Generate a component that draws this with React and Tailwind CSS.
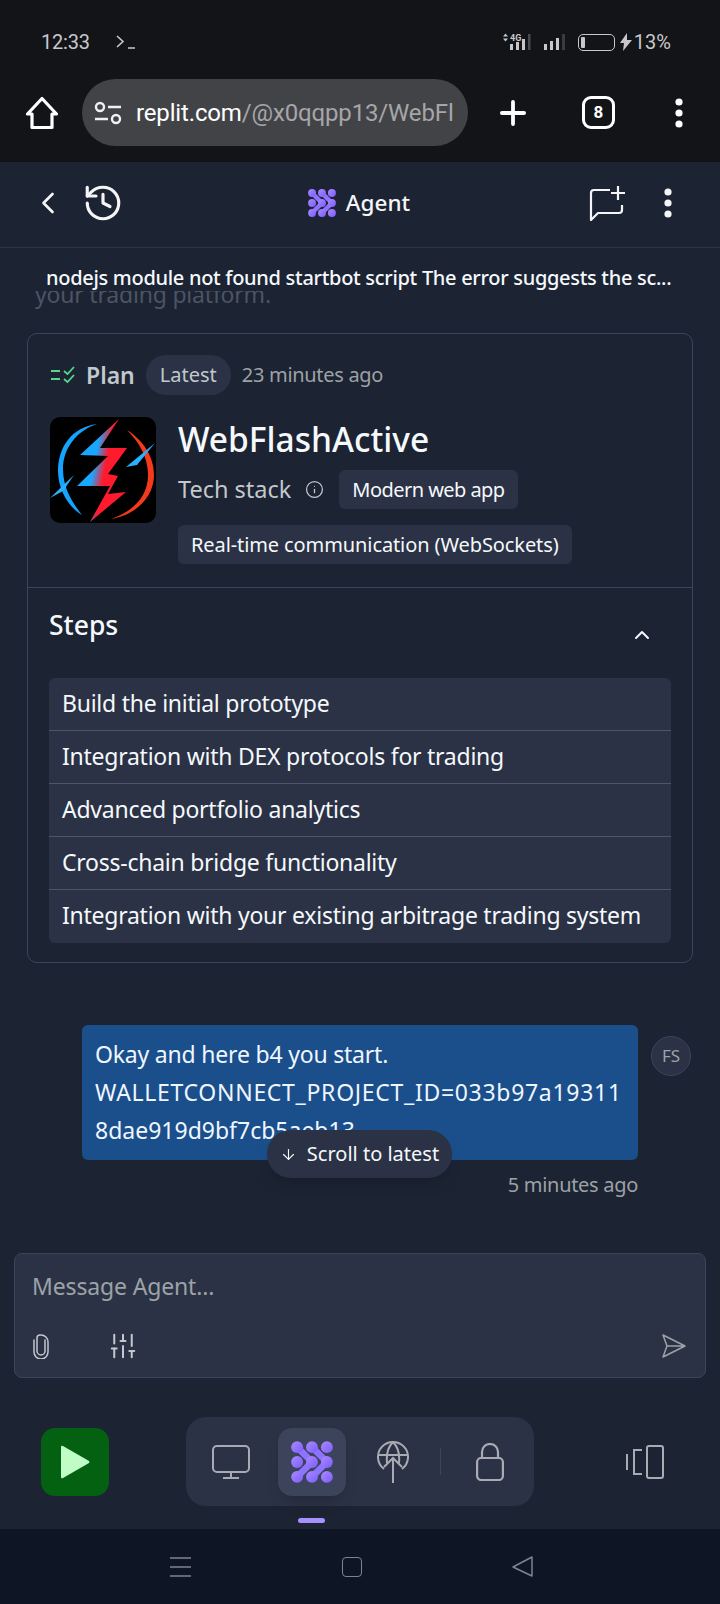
import React from 'react';
import { ChevronLeft, ChevronUp, History, Info, ArrowDown, Plus, SlidersVertical } from 'lucide-react';

const plex = "font-['Noto_Sans',sans-serif]";
const roboto = "font-['Roboto',sans-serif]";

const steps = [
  'Build the initial prototype',
  'Integration with DEX protocols for trading',
  'Advanced portfolio analytics',
  'Cross-chain bridge functionality',
  'Integration with your existing arbitrage trading system',
];

const AgentIcon = ({ className, id }) => (
  <svg viewBox="0 0 24 24" className={className}>
    <defs>
      <linearGradient id={id} x1="0" y1="0" x2="1" y2="1">
        <stop offset="0" stopColor="#a98bff" />
        <stop offset="1" stopColor="#7c5cff" />
      </linearGradient>
    </defs>
    <g fill={`url(#${id})`} stroke="#8f72ff" strokeLinecap="round" strokeLinejoin="round">
      <path d="M3.5 3.5 L12 12 L3.5 20.5 M12 3.5 L20.5 12 L12 20.5" fill="none" strokeWidth="3.8" />
      <circle cx="3.5" cy="3.5" r="3.4" stroke="none" />
      <circle cx="12" cy="3.5" r="3.4" stroke="none" />
      <circle cx="20.5" cy="3.5" r="3.4" stroke="none" />
      <circle cx="3.5" cy="12" r="3.4" stroke="none" />
      <circle cx="12" cy="12" r="3.4" stroke="none" />
      <circle cx="20.5" cy="12" r="3.4" stroke="none" />
      <circle cx="3.5" cy="20.5" r="3.4" stroke="none" />
      <circle cx="12" cy="20.5" r="3.4" stroke="none" />
      <circle cx="20.5" cy="20.5" r="3.4" stroke="none" />
    </g>
  </svg>
);

const Dots = ({ className }) => (
  <svg viewBox="0 0 8 30" className={className} fill="currentColor">
    <circle cx="4" cy="4" r="3.6" />
    <circle cx="4" cy="15" r="3.6" />
    <circle cx="4" cy="26" r="3.6" />
  </svg>
);

const Logo = () => (
  <svg viewBox="0 0 106 106" className="w-[106px] h-[106px] shrink-0 rounded-[10px] bg-black">
    <defs>
      <linearGradient id="bolt" x1="0.15" y1="0.35" x2="0.8" y2="0.6">
        <stop offset="0.3" stopColor="#19a8ff" />
        <stop offset="0.62" stopColor="#ff1a2e" />
      </linearGradient>
    </defs>
    <path d="M47 7 C22 10 8 30 8 54 C8 72 18 90 32 98 C21 84 13 70 13 52 C13 32 26 14 47 7Z" fill="#14a4ff" />
    <path d="M77 13 C94 24 104 40 104 58 C104 80 86 98 61 102 C82 95 99 80 98 56 C97 40 90 26 77 13Z" fill="#f5391d" />
    <path d="M69 2 L30 38 L58 39 L27 69 L60 69 L40 105 L76 75 L58 77 L68 59 L58 57 L77 31 L50 31Z" fill="url(#bolt)" />
    <path d="M105 26 L76 50 L87 48Z" fill="#2bb0ff" />
    <path d="M24 58 L0 81 L13 74Z" fill="#2bb0ff" />
  </svg>
);

const StatusBar = () => (
  <div className={`h-[70px] pl-[41px] pr-[49px] pt-[14px] flex items-center justify-between text-[#c8c8ca] ${roboto}`}>
    <div className="flex items-center gap-[26px]">
      <span className="text-[20px] tracking-[-0.2px]">12:33</span>
      <svg viewBox="0 0 20 14" className="w-[20px] h-[14px]" fill="none" stroke="#c8c8ca" strokeWidth="1.6">
        <path d="M1 1l6 5.5L1 12M12 13h7" />
      </svg>
    </div>
    <div className="flex items-center">
      <svg viewBox="0 0 74 18" className="w-[74px] h-[18px]">
        <path d="M4 3.5l2.5-3 2.5 3zM4 5.5l2.5 3 2.5-3z" fill="#c8c8ca" />
        <text x="11" y="8" fontSize="9" fontWeight="700" fill="#c8c8ca" fontFamily="Roboto, sans-serif">4G</text>
        <path d="M11 11h3v6h-3zM17 9h3v8h-3zM23 6h3v11h-3z" fill="#c8c8ca" />
        <path d="M29 1h2.5v16H29z" fill="#4a4b4e" />
        <path d="M45 11h3v6h-3zM51 8h3v9h-3zM57 5h3v12h-3z" fill="#c8c8ca" />
        <path d="M63 1h3v16h-3z" fill="#3a3b3e" />
      </svg>
      <div className="ml-[5px] w-[37px] h-[17px] border-[1.5px] border-[#c8c8ca] rounded-[5px] p-[2px]">
        <div className="w-[4px] h-full bg-[#c8c8ca] rounded-[1px]" />
      </div>
      <svg viewBox="0 0 12 18" className="ml-[5px] w-[12px] h-[18px]" fill="#c8c8ca">
        <path d="M7 0L0 10h4l-1 8 9-11H7z" />
      </svg>
      <span className="ml-[2px] text-[20px]">13%</span>
    </div>
  </div>
);

const BrowserBar = () => (
  <div className="h-[92px] pb-[7px] pl-[25px] flex items-center text-white">
    <svg viewBox="0 0 34 34" className="w-[34px] h-[34px] shrink-0" fill="none" stroke="white" strokeWidth="3.2" strokeLinejoin="round">
      <path d="M17 2.5 L2.5 18 H7 V31.5 H27 V18 H31.5 Z" />
    </svg>
    <div className={`ml-[23px] w-[386px] h-[67px] shrink-0 rounded-full bg-[#424347] flex items-center pl-[12px] pr-[14px] ${roboto}`}>
      <svg viewBox="0 0 28 24" className="w-[28px] h-[24px] shrink-0" fill="none" stroke="#f0f0f0" strokeWidth="2.4">
        <circle cx="6" cy="6" r="4" />
        <path d="M14 6h13M1 18h13" />
        <circle cx="22" cy="18" r="4" />
      </svg>
      <div className="ml-[14px] whitespace-nowrap text-[24px] tracking-[-0.15px] text-[#a6a6a8]">
        <span className="text-white">replit.com</span>/@x0qqpp13/WebFl
      </div>
    </div>
    <Plus className="ml-[26px] w-[38px] h-[38px] shrink-0" strokeWidth={2.4} />
    <div className={`ml-[50px] w-[33px] h-[33px] shrink-0 border-[3px] border-white rounded-[9px] flex items-center justify-center text-[17px] font-bold ${roboto}`}>8</div>
    <Dots className="ml-[60px] w-[8px] h-[30px] shrink-0" />
  </div>
);

const Header = () => (
  <div className="h-[86px] shrink-0 border-b border-[#2b3547] bg-[#1c2333] px-[30px] pb-[3px] flex items-center justify-between text-[#f5f5f7]">
    <div className="flex items-center gap-[16px]">
      <ChevronLeft className="w-[36px] h-[36px]" strokeWidth={1.8} />
      <History className="w-[42px] h-[42px]" strokeWidth={1.8} />
    </div>
    <div className={`ml-[5px] flex items-center gap-[10px] text-[22.5px] font-medium ${plex}`}>
      <AgentIcon id="agentHeader" className="w-[28px] h-[28px]" />
      Agent
    </div>
    <div className="flex items-center gap-[38px] mr-[18px]">
      <svg viewBox="0 0 37 36" className="w-[37px] h-[36px]" fill="none" stroke="#f5f5f7" strokeWidth="2.2" strokeLinejoin="round">
        <path d="M21 5H5a3 3 0 0 0-3 3V35L9 28H30a3 3 0 0 0 3-3V20" />
        <path d="M29 1v14M22 8h14" />
      </svg>
      <Dots className="w-[8px] h-[30px]" />
    </div>
  </div>
);

const Chip = ({ children, className = '' }) => (
  <span className={`h-[39px] px-[13px] rounded-[6px] bg-[#2b3245] text-[#f5f9fc] text-[20px] flex items-center whitespace-nowrap ${plex} ${className}`}>{children}</span>
);

const PlanCard = () => (
  <div className={`mx-[27px] h-[630px] border border-[#3c445c] rounded-[10px] ${plex}`}>
    <div className="h-[254px] px-[22px] pt-[21px] border-b border-[#3c445c]">
      <div className="flex items-center h-[40px]">
        <svg viewBox="0 0 26 18" className="w-[26px] h-[18px]" fill="none" stroke="#58d68d" strokeWidth="1.8">
          <path d="M1 5h9M1 13h9M14 5l3.5 3L24 1M14 13l3.5 3L24 9" />
        </svg>
        <span className="ml-[10px] text-[23px] font-semibold text-[#c2c8cc]">Plan</span>
        <span className="ml-[11px] h-[40px] px-[14px] rounded-full bg-[#2b3245] flex items-center text-[20px] text-[#c2c8cc]">Latest</span>
        <span className="ml-[11px] text-[20px] tracking-[-0.3px] text-[#9da2a6]">23 minutes ago</span>
      </div>
      <div className="mt-[22px] flex gap-[22px]">
        <Logo />
        <div>
          <div className="text-[33.5px] leading-[44px] font-medium text-[#f5f9fc]">WebFlashActive</div>
          <div className="mt-[9px] flex items-center">
            <span className="text-[23.5px] text-[#c2c8cc]">Tech stack</span>
            <Info className="ml-[14px] w-[19px] h-[19px] text-[#c2c8cc]" strokeWidth={1.6} />
            <span className="ml-[15px]"><Chip className="tracking-[-0.55px]">Modern web app</Chip></span>
          </div>
          <div className="mt-[16px] flex"><Chip className="tracking-[-0.1px]">Real-time communication (WebSockets)</Chip></div>
        </div>
      </div>
    </div>
    <div className="px-[21px] pt-[18px]">
      <div className="flex items-center justify-between h-[40px] pr-[17px]">
        <span className="text-[26.5px] font-medium text-[#f5f9fc]">Steps</span>
        <ChevronUp className="w-[24px] h-[24px] text-[#f5f9fc] mt-[17px]" />
      </div>
      <div className="mt-[32px] rounded-[6px] overflow-hidden divide-y divide-[#4e5569]">
        {steps.map((s) => (
          <div key={s} className="h-[53px] px-[13px] pb-[2px] bg-[#2b3245] flex items-center text-[23px] tracking-[-0.25px] text-[#f5f9fc] whitespace-nowrap">{s}</div>
        ))}
      </div>
    </div>
  </div>
);

const Message = () => (
  <div className={`mt-[62px] pl-[82px] pr-[15px] ${plex}`}>
    <div className="flex gap-[13px]">
      <div className="w-[556px] h-[135px] rounded-[6px] bg-[#1a4f8b] px-[13px] py-[10px] text-[23px] leading-[38px] text-[#eff6ff] whitespace-nowrap overflow-hidden">
        <div className="tracking-[-0.2px]">Okay and here b4 you start.</div>
        <div className="tracking-[0.7px]">WALLETCONNECT_PROJECT_ID=033b97a19311</div>
        <div>8dae919d9bf7cb5aeb13</div>
      </div>
      <div className="mt-[11px] w-[40px] h-[40px] rounded-full bg-[#2b3245] border border-[#3c445c] flex items-center justify-center text-[17px] text-[#9da2a6]">FS</div>
    </div>
    <div className="mt-[10px] w-[556px] text-right text-[20px] tracking-[-0.3px] text-[#9da2a6]">5 minutes ago</div>
  </div>
);

const Composer = () => (
  <div className={`mx-[14px] mt-[53px] w-[692px] h-[125px] shrink-0 rounded-[8px] border border-[#3c445c] bg-[#2b3245] px-[17px] pt-[15px] ${plex}`}>
    <div className="text-[23px] leading-[34px] tracking-[-0.15px] text-[#9da2a6]">Message Agent...</div>
    <div className="mt-[28px] flex items-center justify-between">
      <div className="flex items-center gap-[58px]">
        <svg viewBox="0 0 18 26" className="w-[18px] h-[26px]" fill="none" stroke="#c2c8cc" strokeWidth="1.5" strokeLinecap="round">
          <path d="M13 7V18a4 4 0 0 1-8 0V5a3 3 0 0 1 3-3h1a7 7 0 0 1 7 7v10a6 6 0 0 1-14 0V7" />
        </svg>
        <SlidersVertical className="w-[30px] h-[30px] text-[#c2c8cc]" strokeWidth={1.6} />
      </div>
      <svg viewBox="0 0 26 26" className="w-[26px] h-[26px] mr-[1px]" fill="none" stroke="#9da2a6" strokeWidth="1.5" strokeLinejoin="round">
        <path d="M2 2 L24 13 L2 24 L6 13 Z M6 13 H24" />
      </svg>
    </div>
  </div>
);

const BottomBar = () => (
  <div className="mt-[39px] h-[112px] shrink-0 pl-[41px] flex items-start relative">
    <div className="mt-[11px] w-[68px] h-[68px] rounded-[14px] bg-[#056112] flex items-center justify-center">
      <svg viewBox="0 0 30 34" className="w-[30px] h-[34px]" fill="#bffcc6">
        <path d="M1 2 Q1 0 3 1 L29 16 Q30 17 29 18 L3 33 Q1 34 1 32Z" />
      </svg>
    </div>
    <div className="ml-[77px] w-[348px] h-[89px] rounded-[20px] bg-[#2b3245] flex items-center pl-[26px] text-[#a8acb2]">
      <svg viewBox="0 0 38 34" className="w-[38px] h-[34px]" fill="none" stroke="currentColor" strokeWidth="2">
        <rect x="1" y="1" width="36" height="26" rx="4" />
        <path d="M19 27v6M11 33h16" />
      </svg>
      <div className="ml-[28px] w-[68px] h-[68px] rounded-[14px] bg-[#3c445c] shadow-lg flex items-center justify-center">
        <AgentIcon id="agentTab" className="w-[42px] h-[42px]" />
      </div>
      <svg viewBox="0 0 32 42" className="ml-[31px] w-[32px] h-[42px]" fill="none" stroke="currentColor" strokeWidth="2">
        <path d="M7 28A15 15 0 1 1 25 28" />
        <path d="M10 22C9 12 12 5 16 1c4 4 7 11 6 21M1 14h30M16 17v25M7 26l9-9 9 9" />
      </svg>
      <div className="ml-[31px] w-px h-[27px] bg-[#3c445c]" />
      <svg viewBox="0 0 28 38" className="ml-[35px] w-[28px] h-[38px]" fill="none" stroke="currentColor" strokeWidth="2.2">
        <rect x="1.1" y="15" width="25.8" height="22" rx="4" />
        <path d="M6 15V9a8 8 0 0 1 16 0v6" />
      </svg>
    </div>
    <svg viewBox="0 0 40 34" className="ml-[91px] mt-[28px] w-[40px] h-[34px]" fill="none" stroke="#a8acb2" strokeWidth="2">
      <rect x="22" y="1" width="16" height="32" rx="2" />
      <path d="M17 5H9v24h8M2 9v16" />
    </svg>
    <div className="absolute left-[298px] top-[101px] w-[27px] h-[5px] rounded-full bg-[#a791ff]" />
  </div>
);

const NavBar = () => (
  <div className="flex-1 bg-[#0e1525] flex items-center pl-[170px]">
    <svg viewBox="0 0 21 20" className="w-[21px] h-[20px]" fill="none" stroke="#7f8590" strokeWidth="1.5">
      <path d="M0 1h21M0 10h21M0 19h21" />
    </svg>
    <div className="ml-[151px] w-[20px] h-[20px] border-[1.5px] border-[#7f8590] rounded-[4px]" />
    <svg viewBox="0 0 21 21" className="ml-[150px] w-[21px] h-[21px]" fill="none" stroke="#7f8590" strokeWidth="1.5" strokeLinejoin="round">
      <path d="M20 1v19L1 11z" />
    </svg>
  </div>
);

export default function App() {
  return (
    <div className="w-[720px] h-[1604px] flex flex-col overflow-hidden bg-[#1c2333]">
      <div className="bg-[#121418] shrink-0">
        <StatusBar />
        <BrowserBar />
      </div>
      <Header />
      <div className={`h-[43px] shrink-0 pt-[16px] px-[46px] flex items-center relative z-10 bg-[#1c2333] text-[20px] tracking-[-0.3px] font-medium text-[#f5f9fc] whitespace-nowrap ${plex}`}>
        nodejs module not found startbot script The error suggests the sc...
      </div>
      <div className="h-[42px] shrink-0 px-[35px] overflow-hidden">
        <div className={`-mt-[15px] text-[23px] tracking-[-0.2px] leading-[36px] text-[#4d5463] ${plex}`}>your trading platform.</div>
      </div>
      <PlanCard />
      <div className="relative shrink-0">
        <Message />
        <div className={`absolute left-[267px] top-[167px] w-[185px] h-[48px] rounded-full bg-[#2b3245] shadow-lg flex items-center justify-center gap-[10px] text-[20px] text-[#f5f9fc] whitespace-nowrap ${plex}`}>
          <ArrowDown className="w-[17px] h-[17px]" strokeWidth={1.6} />
          Scroll to latest
        </div>
      </div>
      <Composer />
      <BottomBar />
      <NavBar />
    </div>
  );
}
